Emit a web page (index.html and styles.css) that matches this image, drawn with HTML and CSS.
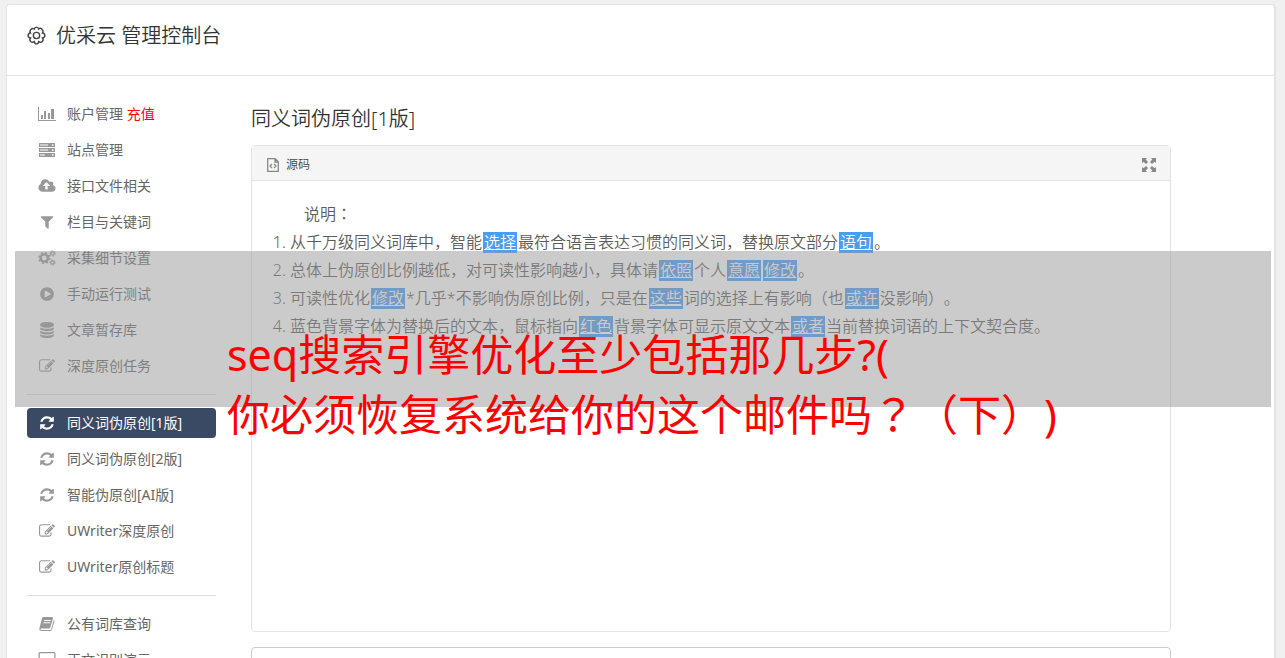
FILE: index.html
```html
<!DOCTYPE html>
<html lang="zh-CN">
<head>
<meta charset="utf-8">
<title>优采云 管理控制台</title>
<link rel="stylesheet" href="styles.css">
</head>
<body>
<svg class="sprite" aria-hidden="true">
  <symbol id="chart" viewBox="0 0 18 16"><path d="M0 1h1v13h17v1H0zM3 9h2v4H3zM6 5h2v8H6zM10 7h2v6h-2zM13 3h3v10h-3z"/></symbol>
  <symbol id="server" viewBox="0 0 18 16"><path fill-rule="evenodd" d="M1 1h16v4H1zM2 2.500v1h8v-1zM14 2.200v1.500h1.500V2.200zM1 6h16v4H1zM2 7.500v1h8v-1zM14 7.200v1.500h1.500V7.200zM1 11h16v4H1zM2 12.500v1h5v-1zM14 12.200v1.500h1.500v-1.500z"/></symbol>
  <symbol id="cloud" viewBox="0 0 1920 1792"><path d="M1280 864q0-14-9-23l-352-352q-9-9-23-9t-23 9l-351 351q-10 12-10 24 0 14 9 23t23 9h224v352q0 13 9.500 22.500t22.500 9.500h192q13 0 22.500-9.500t9.500-22.500v-352h224q13 0 22.500-9.500t9.500-22.500zm640 288q0 159-112.500 271.500t-271.500 112.500h-1088q-185 0-316.500-131.500t-131.500-316.500q0-130 70-240t188-165q-2-30-2-43 0-212 150-362t362-150q156 0 285.500 87t188.500 231q71-62 166-62 106 0 181 75t75 181q0 76-41 138 130 31 213.500 135.500t83.500 238.500z"/></symbol>
  <symbol id="filter" viewBox="0 0 1792 1792"><path d="M1595 295q17 41-14 70l-493 493v742q0 42-39 59-13 5-25 5-27 0-45-19l-256-256q-19-19-19-45v-486l-493-493q-31-29-14-70 17-39 59-39h1280q42 0 59 39z"/></symbol>
  <symbol id="cogs" viewBox="0 0 18 16"><g fill="none" stroke="currentColor"><circle cx="6.300" cy="8" r="3.600" stroke-width="2.400"/><circle cx="6.300" cy="8" r="5.200" stroke-width="1.800" stroke-dasharray="2.100 1.984"/><circle cx="14.500" cy="3.500" r="1.700" stroke-width="1.200"/><circle cx="14.500" cy="3.500" r="2.700" stroke-width="1" stroke-dasharray="1.400 1.427"/><circle cx="14.500" cy="12.500" r="1.700" stroke-width="1.200"/><circle cx="14.500" cy="12.500" r="2.700" stroke-width="1" stroke-dasharray="1.400 1.427"/></g></symbol>
  <symbol id="play" viewBox="0 0 1792 1792"><path d="M896 128q209 0 385.500 103t279.500 279.500 103 385.500-103 385.500-279.500 279.500-385.500 103-385.500-103-279.500-279.500-103-385.500 103-385.500 279.500-279.500 385.500-103zm384 823q32-18 32-55t-32-55l-544-320q-31-19-64-1-32 19-32 56v640q0 37 32 56 16 8 32 8 17 0 32-9z"/></symbol>
  <symbol id="database" viewBox="0 0 1792 1792"><path d="M896 768q237 0 443-43t325-127v170q0 69-103 128t-280 93.500-385 34.500-385-34.500-280-93.500-103-128v-170q119 84 325 127t443 43zm0 768q237 0 443-43t325-127v170q0 69-103 128t-280 93.500-385 34.500-385-34.500-280-93.500-103-128v-170q119 84 325 127t443 43zm0-384q237 0 443-43t325-127v170q0 69-103 128t-280 93.500-385 34.500-385-34.500-280-93.500-103-128v-170q119 84 325 127t443 43zm0-1152q208 0 385 34.500t280 93.500 103 128v128q0 69-103 128t-280 93.500-385 34.500-385-34.500-280-93.500-103-128v-128q0-69 103-128t280-93.500 385-34.500z"/></symbol>
  <symbol id="edit" viewBox="0 0 1792 1792"><path d="M888 1184l116-116-152-152-116 116v56h96v96h56zm440-720q-16-16-33 1l-350 350q-17 17-1 33t33-1l350-350q17-17 1-33zm80 594v190q0 119-84.500 203.500t-203.500 84.500h-832q-119 0-203.500-84.500t-84.500-203.500v-832q0-119 84.500-203.500t203.500-84.500h832q63 0 117 25 15 7 18 23 3 17-9 29l-49 49q-14 14-32 8-23-6-45-6h-832q-66 0-113 47t-47 113v832q0 66 47 113t113 47h832q66 0 113-47t47-113v-126q0-13 9-22l64-64q15-15 35-7t20 29zm-96-738l288 288-672 672h-288v-288zm444 132l-92 92-288-288 92-92q28-28 68-28t68 28l152 152q28 28 28 68t-28 68z"/></symbol>
  <symbol id="refresh" viewBox="0 0 1792 1792"><path d="M1639 1056q0 5-1 7-64 268-268 434.500t-478 166.500q-146 0-282.500-55t-243.500-157l-129 129q-19 19-45 19t-45-19-19-45v-448q0-26 19-45t45-19h448q26 0 45 19t19 45-19 45l-137 137q71 66 161 102t187 36q134 0 250-65t186-179q11-17 53-117 8-23 30-23h192q13 0 22.500 9.500t9.500 22.500zm25-800v448q0 26-19 45t-45 19h-448q-26 0-45-19t-19-45 19-45l138-138q-148-137-349-137-134 0-250 65t-186 179q-11 17-53 117-8 23-30 23h-199q-13 0-22.500-9.500t-9.500-22.500v-7q65-268 270-434.500t480-166.500q146 0 284 55.500t245 156.500l130-129q19-19 45-19t45 19 19 45z"/></symbol>
  <symbol id="book" viewBox="0 0 18 16"><path fill-rule="evenodd" d="M5.500 1H14q1.400.2 1 1.600l-2.700 9q-.3 1-1.300 1H3.300q-1 0-.8.8.2.6 1 .6h8.700q.6 0 .8-.6L15.800 4q1 .5.600 1.700L13.700 14q-.4 1.100-1.500 1.100H3.300Q1.200 15 1.300 12.700L4 2.300Q4.300 1 5.500 1zM6.300 4l-.3 1h6.700l.3-1zM5.600 6.300l-.3 1H12l.3-1z"/></symbol>
  <symbol id="monitor" viewBox="0 0 18 16"><path fill-rule="evenodd" d="M2 0h14q1.500 0 1.500 1.500v10Q17.500 13 16 13h-5v2h2v1H5v-1h2v-2H2Q.5 13 .5 11.500v-10Q.5 0 2 0zM1.800 1.300v10.400h14.400V1.300z"/></symbol>
</svg>

<div class="page">
  <header class="topbar">
    <svg class="gear" viewBox="0 0 20 20"><path d="M10 1.200Q12 1.200 12.200 3.200Q14.200 1.600 15.900 3.600Q17.600 5.200 16.300 7.400Q18.800 7.700 18.800 10Q18.800 12.300 16.300 12.600Q17.800 14.600 16.100 16.300Q14.300 17.900 12.300 16.500Q12 18.800 10 18.800Q8 18.800 7.700 16.500Q5.700 17.900 3.900 16.300Q2.200 14.600 3.700 12.600Q1.200 12.300 1.200 10Q1.200 7.700 3.700 7.400Q2.400 5.200 4.100 3.600Q5.800 1.800 7.800 3.200Q8 1.200 10 1.200Z"/><circle cx="10" cy="10" r="3.300"/></svg>
    <h1>优采云 管理控制台</h1>
  </header>
  <div class="layout">
    <nav class="sidebar">
      <a href="#"><svg><use href="#chart"/></svg><span>账户管理 <em>充值</em></span></a>
      <a href="#"><svg><use href="#server"/></svg>站点管理</a>
      <a href="#"><svg><use href="#cloud"/></svg>接口文件相关</a>
      <a href="#"><svg><use href="#filter"/></svg>栏目与关键词</a>
      <a href="#"><svg><use href="#cogs"/></svg>采集细节设置</a>
      <a href="#"><svg><use href="#play"/></svg>手动运行测试</a>
      <a href="#"><svg><use href="#database"/></svg>文章暂存库</a>
      <a href="#"><svg><use href="#edit"/></svg>深度原创任务</a>
      <hr>
      <a href="#" class="active"><svg><use href="#refresh"/></svg>同义词伪原创[1版]</a>
      <a href="#"><svg><use href="#refresh"/></svg>同义词伪原创[2版]</a>
      <a href="#"><svg><use href="#refresh"/></svg>智能伪原创[AI版]</a>
      <a href="#"><svg><use href="#edit"/></svg>UWriter深度原创</a>
      <a href="#"><svg><use href="#edit"/></svg>UWriter原创标题</a>
      <hr>
      <a href="#"><svg><use href="#book"/></svg>公有词库查询</a>
      <a href="#"><svg><use href="#monitor"/></svg>正文识别演示</a>
    </nav>
    <main class="main">
      <h2>同义词伪原创[1版]</h2>
      <section class="editor">
        <div class="toolbar">
          <button type="button"><svg class="source" viewBox="0 0 12 14"><path d="M.7.7h7.500l3.100 3v9.600H.7zM8 .7V4h3.300M5 6 3 8l2 2M7 6l2 2-2 2"/></svg>源码</button>
          <button type="button" aria-label="全屏"><svg class="expand" viewBox="0 0 14 14"><path d="M0 0h5L3.700 1.500 6 4 4 6 1.500 3.700 0 5zM14 0v5l-1.500-1.300L10 6 8 4l2.300-2.500L9 0zM0 14V9l1.500 1.300L4 8l2 2-2.300 2.500L5 14zM14 14H9l1.300-1.500L8 10l2-2 2.500 2.300L14 9z"/></svg></button>
        </div>
        <div class="content">
          <p>说明<span lang="zh-TW" class="centered">：</span></p>
          <ol>
            <li>从千万级同义词库中，智能<mark>选择</mark>最符合语言表达习惯的同义词，替换原文部分<mark>语句</mark>。</li>
            <li>总体上伪原创比例越低，对可读性影响越小，具体请<mark>依照</mark>个人<mark>意愿</mark><mark>修改</mark>。</li>
            <li>可读性优化<mark>修改</mark>*几乎*不影响伪原创比例，只是在<mark>这些</mark>词的选择上有影响（也<mark>或许</mark>没影响）。</li>
            <li>蓝色背景字体为替换后的文本，鼠标指向<mark>红色</mark>背景字体可显示原文文本<mark>或者</mark>当前替换词语的上下文契合度。</li>
          </ol>
        </div>
      </section>
      <textarea aria-label="原文"></textarea>
    </main>
  </div>
</div>
<div class="banner"><p>seq搜索引擎优化至少包括那几步?(<br>你必须恢复系统给你的这个邮件吗<span lang="zh-TW" class="centered">？</span>（下）)</p></div>
</body>
</html>
```
FILE: styles.css
```css
* { box-sizing: border-box; }
html { height: 100%; overflow: hidden; }
body {
  margin: 0;
  height: 100%;
  overflow: hidden;
  background: #f0f0f0;
  color: #666;
  font: 350 14px/20px "Noto Sans", "Noto Sans CJK SC", sans-serif;
  text-spacing-trim: space-all;
}
h1, h2, p, ol { margin: 0; font-weight: 350; }
.sprite { display: none; }
.page {
  margin: 4px 9px 0 6px;
  background: #fff;
  border: 1px solid #e3e3e3;
  border-right-width: 2px;
  border-radius: 4px;
}
.topbar {
  display: flex;
  align-items: center;
  gap: 10px;
  height: 71px;
  padding: 0 20px 9px;
  border-bottom: 1px solid #e3e3e3;
  color: #333;
}
.topbar h1 { font-size: 20px; line-height: 28px; }
.gear { width: 19px; height: 19px; fill: none; stroke: #444; stroke-width: 1.5; }
.layout {
  display: grid;
  grid-template-columns: 189px minmax(0, 1fr);
  gap: 35px;
  padding: 23px 103px 20px 20px;
}
.sidebar { display: flex; flex-direction: column; gap: 6px; }
.sidebar a {
  display: flex;
  align-items: center;
  gap: 11px;
  height: 30px;
  padding: 0 11px;
  border-radius: 4px;
  color: #666;
  font-weight: 400;
  text-decoration: none;
}
.sidebar svg { width: 18px; height: 16px; fill: #999; color: #999; }
.sidebar em { color: #f00; font-style: normal; }
.sidebar .active { background: #3b4a64; color: #fff; }
.sidebar .active svg { fill: #fff; }
.sidebar hr { width: 100%; margin: 7px 0; border: 0; border-top: 1px solid #ddd; }
.main { padding-top: 6px; }
.main h2 { margin-bottom: 12px; color: #333; font-size: 20px; line-height: 28px; }
.editor { min-height: 487px; border: 1px solid #e3e3e3; border-radius: 4px; }
.toolbar {
  display: flex;
  justify-content: space-between;
  align-items: center;
  height: 35px;
  padding: 3px 14px 0 15px;
  background: #f5f5f5;
  border-bottom: 1px solid #e3e3e3;
}
.toolbar button {
  display: flex;
  align-items: center;
  gap: 7px;
  padding: 0;
  border: 0;
  background: none;
  color: #444;
  font: inherit;
  font-size: 12px;
}
.source { width: 12px; height: 14px; fill: none; stroke: #888; stroke-width: 1.3; }
.expand { width: 14px; height: 14px; fill: #888; }
.content { padding: 19px 20px; color: #5c5c5c; font-size: 16px; line-height: 28px; }
.content p { padding-left: 32px; }
.centered { font-family: "Noto Sans CJK TC", sans-serif; line-height: 1; }
.content ol { padding-left: 18px; }
.content mark {
  margin: 0 1px;
  padding: 0 1px;
  background: linear-gradient(#4b9cf3, #4b9cf3) center / 100% 21px no-repeat;
  color: #fff;
  text-decoration: underline;
}
textarea {
  display: block;
  width: 100%;
  height: 120px;
  margin-top: 15px;
  border: 1px solid #ccc;
  border-radius: 4px;
  resize: none;
}
.banner {
  position: absolute;
  top: 251px;
  left: 15px;
  right: 14px;
  height: 156px;
  padding: 74px 0 0 212px;
  background: rgba(151, 151, 151, 0.5);
}
.banner p {
  color: #f00;
  font-size: 43px;
  font-weight: 400;
  line-height: 60px;
  white-space: nowrap;
}
```
